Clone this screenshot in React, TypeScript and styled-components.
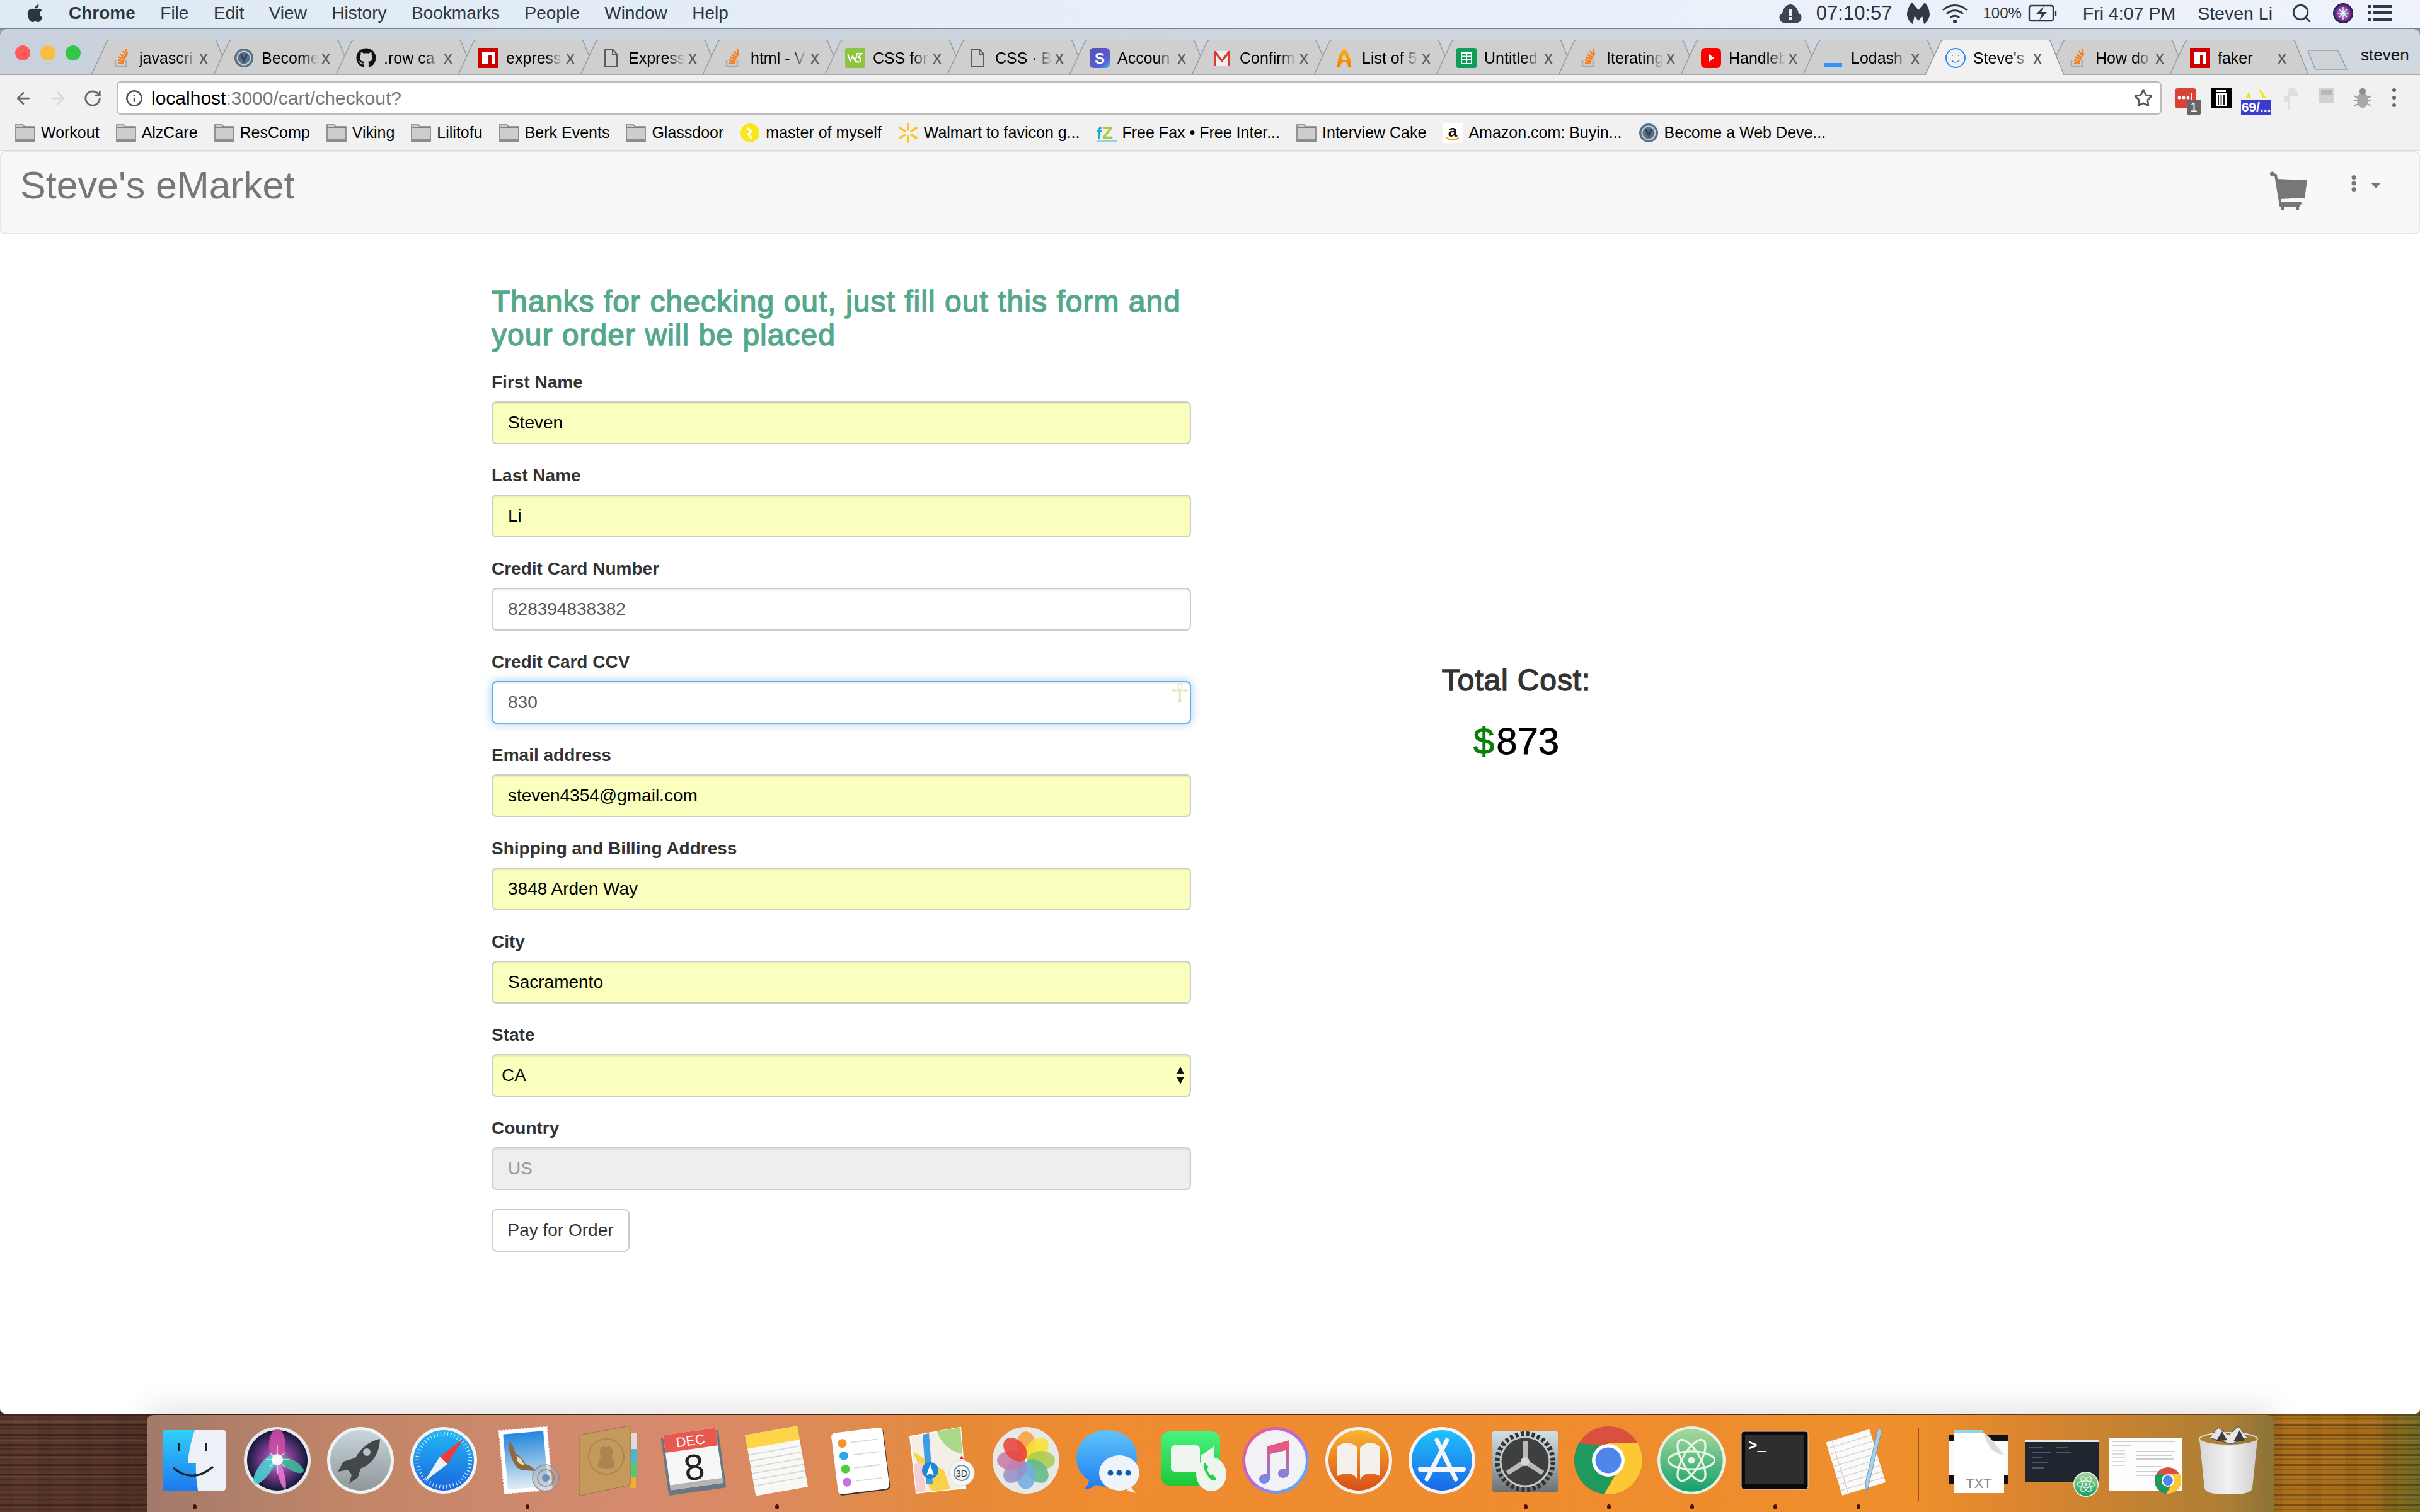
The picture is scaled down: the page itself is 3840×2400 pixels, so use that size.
import React from "react";
import styled, { createGlobalStyle } from "styled-components";
import { FaApple, FaGithub } from "react-icons/fa";
import { ArrowLeft, ArrowRight, RotateCw, Info, Search, Star } from "lucide-react";

const Global = createGlobalStyle`
  html, body { margin: 0; padding: 0; background: #fff; }
  * { box-sizing: border-box; }
`;

const Root = styled.div`
  width: 3840px; height: 2400px; display: flex; flex-direction: column; overflow: hidden;
  font-family: "Liberation Sans", Arial, sans-serif; color: #333;
`;

/* ---------- menu bar ---------- */
const MenuBar = styled.header`
  height: 46px; flex: none; display: flex; align-items: center; padding: 0 45px 2px 43px;
  background: linear-gradient(90deg, #dfeaf4, #e8eff8 50%, #eef3fb);
  border-bottom: 2px solid #72859a; color: #2c3640; font-size: 28px;
`;
const AppleMark = styled.span`display: flex; width: 25px; font-size: 32px; color: #2c3640; margin-right: 41px;`;
const MenuItem = styled.span<{ $bold?: boolean }>`
  margin-right: 39.5px; font-weight: ${p => (p.$bold ? 700 : 400)}; white-space: nowrap;
`;
const StatusArea = styled.div`margin-left: auto; display: flex; align-items: center;`;
const StatusItem = styled.span<{ $gap: number; $size?: number }>`
  margin-left: ${p => p.$gap}px; display: flex; align-items: center; white-space: nowrap;
  font-size: ${p => p.$size ?? 28.5}px;
`;

/* ---------- window ---------- */
const Backdrop = styled.div`
  flex: 1; min-height: 0; display: flex;
  background: linear-gradient(180deg, #8a99a9 0 100px, transparent 100px), linear-gradient(90deg, #3b241c 50%, #7a4f14 50%);
`;
const Window = styled.div`
  flex: 1; display: flex; flex-direction: column; background: #fff; overflow: hidden;
  border-radius: 12px 12px 8px 8px;
`;

const TabStrip = styled.div`
  height: 73px; flex: none; display: flex; align-items: flex-end; padding-left: 145px; position: relative;
  background: linear-gradient(90deg, #c9d2dc, #d2d8df); box-shadow: inset 0 -2px 0 #a8a8a8;
`;
const Lights = styled.div`position: absolute; left: 24px; top: 26px; display: flex; gap: 16px;`;
const Light = styled.i<{ $c: string }>`
  display: block; width: 24px; height: 24px; border-radius: 50%; background: ${p => p.$c};
`;
const Tab = styled.div<{ $active?: boolean }>`
  width: 220px; height: 56px; margin-right: -26px; flex: none; position: relative;
  z-index: ${p => (p.$active ? 3 : 1)}; display: flex; align-items: center; padding: 2px 0 0 32px;
`;
const TabShape = styled.svg`position: absolute; left: 0; top: 0; width: 220px; height: 56px;`;
const Favicon = styled.span`position: relative; display: flex; width: 32px; height: 32px; flex: none;`;
const TabTitle = styled.span<{ $plain?: boolean }>`
  position: relative; margin-left: 12px; width: 90px; overflow: hidden; white-space: nowrap; font-size: 25px; color: #000;
  ${p => (p.$plain ? "" : "mask-image: linear-gradient(90deg, #000 70%, transparent 100%);")}
`;
const TabClose = styled.span`
  position: relative; margin-left: 0; width: 24px; text-align: center; font-size: 27px; line-height: 1; color: #555;
`;
const NewTab = styled.svg`position: absolute; left: 3660px; top: 32px; width: 68px; height: 34px;`;
const ProfileName = styled.span`position: absolute; left: 3746px; top: 26px; font-size: 26px; color: #111;`;

const Toolbar = styled.div`
  height: 66px; flex: none; background: #f1f1f1; display: flex; align-items: flex-start; padding: 10px 0 0 22px;
`;
const NavBtn = styled.span<{ $c: string; $gap: number }>`
  display: flex; width: 30px; height: 53px; align-items: center; justify-content: center;
  color: ${p => p.$c}; margin-right: ${p => p.$gap}px;
`;
const AddressBar = styled.div`
  width: 3245px; height: 53px; background: #fff; border: 2px solid #bcbcbc; border-radius: 7px; flex: none;
  display: flex; align-items: center; padding: 0 12px 0 12px; font-size: 30px; color: #000;
`;
const UrlHost = styled.span`margin-left: 13px;`;
const UrlRest = styled.span`color: #777;`;
const StarSlot = styled.span`margin-left: auto; display: flex; color: #555;`;
const ExtSlot = styled.span<{ $gap: number }>`display: flex; margin-left: ${p => p.$gap}px; margin-top: 11px; flex: none;`;

const Bookmarks = styled.nav`
  height: 55px; flex: none; background: #f1f1f1; border-bottom: 2px solid #dcdcdc;
  display: flex; align-items: center; padding: 0 0 2px 24px; font-size: 25px; color: #000;
`;
const Bookmark = styled.span`display: flex; align-items: center; gap: 9px; margin-right: 26px; white-space: nowrap;`;

const Navbar = styled.div`
  height: 132px; flex: none; background: #f8f8f8; border: 2px solid #e7e7e7; border-radius: 8px;
  display: flex; align-items: flex-start; padding: 0 0 0 30px; position: relative;
`;
const Brand = styled.a`font-size: 61px; line-height: 104px; color: #777;`;
const NavRight = styled.div`margin-left: auto; display: flex; align-items: flex-start; padding: 30px 60px 0 0;`;
const Caret = styled.i`
  display: block; margin: 18px 0 0 22px; width: 0; height: 0;
  border-left: 8px solid transparent; border-right: 8px solid transparent; border-top: 9px solid #777;
`;
const Kebab = styled.svg`margin: 6px 0 0 68px; width: 10px; height: 26px;`;

/* ---------- page ---------- */
const Content = styled.main`flex: 1; width: 2340px; margin: 0 auto; display: flex;`;
const FormColumn = styled.form`width: 1170px; padding: 81px 30px 0;`;
const Heading = styled.h3`
  margin: 0 0 28px; font-size: 48px; line-height: 52.8px; font-weight: 500; letter-spacing: 1.03px;
  color: #55a88b; -webkit-text-stroke: 1.5px #55a88b;
`;
const Field = styled.div`margin-bottom: 30px; position: relative;`;
const Label = styled.label`display: block; font-size: 28px; line-height: 40px; margin-bottom: 10px; font-weight: 700; color: #333;`;
const Input = styled.input<{ $auto?: boolean; $focus?: boolean }>`
  display: block; width: 100%; height: 68px; padding: 0 24px; font: 28px "Liberation Sans", Arial, sans-serif; outline: none;
  color: ${p => (p.$auto ? "#000" : "#555")};
  background: ${p => (p.$auto ? "#faffbd" : "#fff")};
  border: 2px solid ${p => (p.$focus ? "#66afe9" : "#ccc")}; border-radius: 8px;
  box-shadow: ${p => (p.$focus ? "inset 0 2px 2px rgba(0,0,0,.075), 0 0 16px rgba(102,175,233,.6)" : "inset 0 2px 2px rgba(0,0,0,.075)")};
  &:disabled { background: #eee; color: #999; -webkit-text-fill-color: #999; opacity: 1; }
`;
const Ankh = styled.span`
  position: absolute; right: 3px; bottom: 26px; font: 40px/46px "DejaVu Sans", sans-serif; color: #e2e7bd;
`;
const Select = styled.select`
  display: block; width: 100%; height: 68px; padding: 0 14px; font: 28px "Liberation Sans", Arial, sans-serif; color: #000;
  appearance: none; background: #faffbd; border: 2px solid #ccc; border-radius: 8px; outline: none;
  box-shadow: inset 0 2px 2px rgba(0,0,0,.075);
`;
const SelectArrows = styled.svg`position: absolute; right: 11px; bottom: 20px; width: 12px; height: 28px;`;
const PayButton = styled.button`
  width: 219px; height: 68px; font: 28px "Liberation Sans", Arial, sans-serif; color: #333; background: #fff;
  border: 2px solid #ccc; border-radius: 8px; padding: 0; margin-top: 1px; display: block;
`;
const CostColumn = styled.aside`width: 972px; padding-top: 682px; text-align: center;`;
const CostLabel = styled.h3`
  margin: 0; font-size: 48px; line-height: 52.8px; font-weight: 500; letter-spacing: .9px; color: #333; -webkit-text-stroke: 1.5px #333;
`;
const CostValue = styled.div`margin-top: 37px; font-size: 60px; line-height: 66px; color: #000; -webkit-text-stroke: .8px #000;`;
const Dollar = styled.span`color: #0a800a; margin-right: 3px; -webkit-text-stroke: 1.2px #0a800a;`;

/* ---------- dock ---------- */
const DockArea = styled.footer`
  height: 156px; flex: none; display: flex; justify-content: center;
  background:
    repeating-linear-gradient(180deg, rgba(0,0,0,.3) 0 3px, transparent 3px 7px, rgba(0,0,0,.18) 7px 9px, transparent 9px 16px),
    repeating-linear-gradient(180deg, transparent 0 11px, rgba(255,220,190,.08) 11px 14px, transparent 14px 29px),
    repeating-linear-gradient(90deg, rgba(0,0,0,.06) 0 23px, transparent 23px 61px),
    linear-gradient(90deg, #5e3a2e, #553327 240px, #7a5530 3000px, #b0721c 3610px, #a66c1a 3760px, #6e6a24 3840px);
`;
const Dock = styled.div`
  width: 3375px; height: 156px; display: flex; padding-left: 9px; border-radius: 10px 10px 0 0; position: relative; margin-top: 2px;
  background: linear-gradient(90deg, #a27a6a 0, #c08568 300px, #d58a6f 750px, #dc8a5e 1000px, #e68a38 1300px, #ef8b30 1500px, #ee8c2e 2400px, #ef8f2c 2800px, #d9852f 3000px, #ad7f35 3300px, #8b7338 3375px);
  box-shadow: 0 -10px 50px rgba(0,0,0,.12);
`;
const DockSlot = styled.div<{ $on?: boolean }>`
  width: 132px; flex: none; position: relative; display: flex; justify-content: center; padding-top: 18px;
  ${p => p.$on ? `&::after { content: ""; position: absolute; left: 64px; bottom: 6px; width: 6px; height: 8px; border-radius: 50%; background: #4a0f05; }` : ""}
`;
const DockIconSvg = styled.svg`width: 108px; height: 108px; flex: none; overflow: visible;`;
const DockDivider = styled.div`width: 60px; flex: none; display: flex; justify-content: center; padding-top: 20px;`;
const DividerLine = styled.i`display: block; width: 2px; height: 116px; background: rgba(110,50,20,.65);`;

/* ---------- favicons ---------- */
const SoFav = () => (
  <svg viewBox="0 0 32 32" width="32" height="32">
    <path d="M6 20v9h17v-9" fill="none" stroke="#aaa" strokeWidth="2.5" />
    <path d="M10 24h10M10.3 19.5l10 1.5M11.5 14.5l9.5 3.5M14 10l8.5 6M18 5l6 8.5M23 2l2 10" stroke="#f48024" strokeWidth="2.8" />
  </svg>
);
const VFav = () => (
  <svg viewBox="0 0 32 32" width="32" height="32">
    <circle cx="16" cy="16" r="15" fill="#5a7084" />
    <circle cx="16" cy="16" r="10.5" fill="none" stroke="#c9d3dc" strokeWidth="2" />
    <path d="M9 9l7 15 7-15h-4l-3 7-3-7z" fill="#34495e" />
  </svg>
);
const NpmFav = () => (
  <svg viewBox="0 0 32 32" width="32" height="32">
    <rect width="32" height="32" fill="#c00" />
    <path d="M6 6h20v20h-5V11h-5v15H6z" fill="#fff" />
  </svg>
);
const DocFav = () => (
  <svg viewBox="0 0 32 32" width="32" height="32">
    <path d="M7 2h12l7 8v20H7zM19 2v8h7" fill="none" stroke="#5c5c5c" strokeWidth="2" />
  </svg>
);
const W3Fav = () => (
  <svg viewBox="0 0 32 32" width="32" height="32">
    <rect width="32" height="32" rx="3" fill="#8cc63f" />
    <path d="M4 9l4 12 4-8 4 8 3-12h7l-5 6c4 0 5 5 2 7s-5 0-6-1" fill="none" stroke="#fff" strokeWidth="2" />
  </svg>
);
const StripeFav = () => (
  <svg viewBox="0 0 32 32" width="32" height="32">
    <defs><linearGradient id="stf" x1="0" y1="0" x2="1" y2="1"><stop offset="0" stopColor="#5a4fb0" /><stop offset=".75" stopColor="#5560d8" /><stop offset="1" stopColor="#42c6f5" /></linearGradient></defs>
    <rect width="32" height="32" rx="6" fill="url(#stf)" />
    <text x="16" y="25" textAnchor="middle" fontFamily="Liberation Sans" fontWeight="700" fontSize="24" fill="#fff">S</text>
  </svg>
);
const GmailFav = () => (
  <svg viewBox="0 0 32 32" width="32" height="32">
    <rect x="3" y="5" width="26" height="24" fill="#eee" />
    <path d="M3 29V5h3l10 13L26 5h3v24h-4V12l-9 11-9-11v17z" fill="#d93b2b" />
  </svg>
);
const FlameFav = () => (
  <svg viewBox="0 0 32 32" width="32" height="32">
    <defs><linearGradient id="flf" x1="0" y1="0" x2="0" y2="1"><stop offset="0" stopColor="#ffb400" /><stop offset="1" stopColor="#f57c00" /></linearGradient></defs>
    <path d="M16 1C8 8 5 20 5 31h5c0-6 2-9 6-9s6 3 6 9h5C27 20 24 8 16 1zm0 9c3 3 4 6 4 9h-8c0-3 1-6 4-9z" fill="url(#flf)" />
  </svg>
);
const SheetFav = () => (
  <svg viewBox="0 0 32 32" width="32" height="32">
    <rect width="32" height="32" rx="3" fill="#0f9d58" />
    <path d="M8 8h16v17H8zM8 13.5h16M8 19h16M16 8v17" fill="none" stroke="#fff" strokeWidth="2" />
  </svg>
);
const YtFav = () => (
  <svg viewBox="0 0 32 32" width="32" height="32">
    <rect width="32" height="32" rx="7" fill="#f00" />
    <path d="M13 10l8 6-8 6z" fill="#fff" />
  </svg>
);
const LodashFav = () => (
  <svg viewBox="0 0 32 32" width="32" height="32"><rect x="2" y="24" width="28" height="6" fill="#3492ff" /></svg>
);
const SmileFav = () => (
  <svg viewBox="0 0 32 32" width="32" height="32">
    <circle cx="16" cy="16" r="15" fill="none" stroke="#2a8cf0" strokeWidth="2" />
    <path d="M11 11v2M21 11v2M10 20q6 6 12 0" fill="none" stroke="#2a8cf0" strokeWidth="1.6" />
  </svg>
);
const FolderIcon = () => (
  <svg viewBox="0 0 32 32" width="32" height="32">
    <path d="M1 3h11l3 3h16v24H1z" fill="#cdcdcd" stroke="#808080" strokeWidth="1.6" />
    <path d="M1 7h30" stroke="#808080" strokeWidth="2" />
    <rect x="1" y="26" width="30" height="4" fill="#8c8c8c" />
  </svg>
);
const MasterFav = () => (
  <svg viewBox="0 0 32 32" width="32" height="32">
    <circle cx="16" cy="16" r="15" fill="#f8e71c" />
    <path d="M12 8l6 6-5 4 6 7" fill="none" stroke="#fff" strokeWidth="3" />
  </svg>
);
const WalmartFav = () => (
  <svg viewBox="0 0 32 32" width="32" height="32">
    <path d="M16 1v10M16 21v10M3 8l8 5M21 19l8 5M29 8l-8 5M11 19l-8 5" stroke="#ffc220" strokeWidth="3.4" strokeLinecap="round" />
  </svg>
);
const FaxFav = () => (
  <svg viewBox="0 0 32 32" width="32" height="32">
    <text x="0" y="25" fontFamily="Liberation Sans" fontWeight="700" fontSize="24" fill="#1ea7dc">f</text>
    <text x="9" y="25" fontFamily="Liberation Sans" fontWeight="700" fontSize="28" fill="#a4cd39">Z</text>
    <rect y="28" width="32" height="3" fill="#8fd3ee" />
  </svg>
);
const AmazonFav = () => (
  <svg viewBox="0 0 32 32" width="32" height="32">
    <rect width="32" height="32" rx="4" fill="#fff" />
    <text x="16" y="22" textAnchor="middle" fontFamily="Liberation Sans" fontWeight="700" fontSize="26" fill="#111">a</text>
    <path d="M6 24q10 6 20 0" fill="none" stroke="#f90" strokeWidth="2.4" />
  </svg>
);

const tabs: { t: string; f: React.ReactNode; active?: boolean; plain?: boolean }[] = [
  { t: "javascri", f: <SoFav /> },
  { t: "Become", f: <VFav /> },
  { t: ".row ca", f: <FaGithub size={32} color="#111" /> },
  { t: "express", f: <NpmFav /> },
  { t: "Express", f: <DocFav /> },
  { t: "html - V", f: <SoFav /> },
  { t: "CSS for", f: <W3Fav /> },
  { t: "CSS · B", f: <DocFav /> },
  { t: "Accoun", f: <StripeFav /> },
  { t: "Confirm", f: <GmailFav /> },
  { t: "List of 5", f: <FlameFav /> },
  { t: "Untitled", f: <SheetFav /> },
  { t: "Iterating", f: <SoFav /> },
  { t: "Handleb", f: <YtFav /> },
  { t: "Lodash", f: <LodashFav /> },
  { t: "Steve's", f: <SmileFav />, active: true },
  { t: "How do", f: <SoFav /> },
  { t: "faker", f: <NpmFav />, plain: true },
];

const marks: { t: string; f: React.ReactNode }[] = [
  { t: "Workout", f: <FolderIcon /> },
  { t: "AlzCare", f: <FolderIcon /> },
  { t: "ResComp", f: <FolderIcon /> },
  { t: "Viking", f: <FolderIcon /> },
  { t: "Lilitofu", f: <FolderIcon /> },
  { t: "Berk Events", f: <FolderIcon /> },
  { t: "Glassdoor", f: <FolderIcon /> },
  { t: "master of myself", f: <MasterFav /> },
  { t: "Walmart to favicon g...", f: <WalmartFav /> },
  { t: "Free Fax • Free Inter...", f: <FaxFav /> },
  { t: "Interview Cake", f: <FolderIcon /> },
  { t: "Amazon.com: Buyin...", f: <AmazonFav /> },
  { t: "Become a Web Deve...", f: <VFav /> },
];

/* ---------- dock icons ---------- */
const ChromeArt = ({ cx, cy, r }: { cx: number; cy: number; r: number }) => {
  const s = r / 50;
  return (
    <g transform={`translate(${cx} ${cy}) scale(${s})`}>
      <circle r="50" fill="#d9503f" />
      <path d="M-43.3 -25 A50 50 0 0 0 -6 49.6 L22 0 L-10 -22 Z" fill="#1d9a5c" />
      <path d="M0 -25 H43.3 A50 50 0 0 1 -6 49.6 L20 5 Z" fill="#fcc934" />
      <circle r="24" fill="#fff" />
      <circle r="19" fill="#4f86ec" />
    </g>
  );
};
const AtomArt = ({ cx, cy, r, id }: { cx: number; cy: number; r: number; id: string }) => (
  <g transform={`translate(${cx} ${cy}) scale(${r / 50})`}>
    <defs><linearGradient id={id} x1="0" y1="0" x2="0" y2="1"><stop offset="0" stopColor="#a9d89b" /><stop offset="1" stopColor="#14a06c" /></linearGradient></defs>
    <circle r="50" fill="#e6f0e2" />
    <circle r="46" fill={`url(#${id})`} />
    <g fill="none" stroke="#e8f5e4" strokeWidth="3">
      <ellipse rx="34" ry="13" transform="rotate(60)" />
      <ellipse rx="34" ry="13" transform="rotate(120)" />
      <ellipse rx="34" ry="13" />
    </g>
    <circle r="5" fill="#e8f5e4" />
  </g>
);

const FinderIcon = () => (
  <DockIconSvg viewBox="0 0 108 108">
    <defs><linearGradient id="fl" x1="0" y1="0" x2="0" y2="1"><stop offset="0" stopColor="#2fd0fb" /><stop offset="1" stopColor="#1e79ef" /></linearGradient></defs>
    <rect x="4" y="6" width="100" height="96" rx="4" fill="url(#fl)" />
    <path d="M55 6C49 24 45 42 44 58H57C56 72 58 88 60 102H100a4 4 0 0 0 4-4V10a4 4 0 0 0-4-4Z" fill="#edf1f7" />
    <rect x="29" y="26" width="3" height="13" fill="#222" /><rect x="72" y="26" width="3" height="13" fill="#222" />
    <path d="M21 66Q52 92 84 64" fill="none" stroke="#1d2430" strokeWidth="3.5" />
  </DockIconSvg>
);
const SiriIcon = () => (
  <DockIconSvg viewBox="0 0 108 108">
    <defs>
      <radialGradient id="sg" cx=".5" cy=".5" r=".55"><stop offset="0" stopColor="#6ad9d6" /><stop offset=".4" stopColor="#8b3f9a" /><stop offset=".9" stopColor="#141a3c" /></radialGradient>
    </defs>
    <circle cx="54" cy="54" r="53" fill="#e8e8e8" />
    <circle cx="54" cy="54" r="48" fill="url(#sg)" />
    <g opacity=".85">
      <ellipse cx="54" cy="30" rx="13" ry="26" fill="#d44fa8" />
      <ellipse cx="34" cy="68" rx="10" ry="28" transform="rotate(35 34 68)" fill="#4fd9d9" />
      <ellipse cx="78" cy="62" rx="8" ry="20" transform="rotate(-60 78 62)" fill="#3fbf9a" />
      <ellipse cx="60" cy="76" rx="5" ry="24" transform="rotate(-15 60 76)" fill="#ee7bd0" />
    </g>
    <circle cx="54" cy="53" r="9" fill="#fff" opacity=".9" />
    <path d="M54 30v46M36 53h36M42 42l24 22M66 42 42 64" stroke="#fff" strokeWidth="1.6" opacity=".7" />
  </DockIconSvg>
);
const LaunchIcon = () => (
  <DockIconSvg viewBox="0 0 108 108">
    <defs><linearGradient id="lg" x1="0" y1="0" x2="0" y2="1"><stop offset="0" stopColor="#c8d6dc" /><stop offset="1" stopColor="#8f9698" /></linearGradient></defs>
    <circle cx="54" cy="54" r="53" fill="#eef3f4" />
    <circle cx="54" cy="54" r="48" fill="url(#lg)" />
    <path d="M85 20C66 24 54 36 46 50L27 56 18 72l16-3 6 8-4 14 14-10 4-14C74 60 84 42 85 20Z" fill="#434749" />
    <circle cx="64" cy="41" r="6" fill="#b8c3c7" />
  </DockIconSvg>
);
const SafariIcon = () => (
  <DockIconSvg viewBox="0 0 108 108">
    <defs><linearGradient id="sfg" x1="0" y1="0" x2="0" y2="1"><stop offset="0" stopColor="#22b8f4" /><stop offset="1" stopColor="#1a66dd" /></linearGradient></defs>
    <circle cx="54" cy="54" r="53" fill="#f2f2f2" />
    <circle cx="54" cy="54" r="48" fill="url(#sfg)" />
    <circle cx="54" cy="54" r="42" fill="none" stroke="#d6eaff" strokeWidth="6" strokeDasharray="1.2 4.3" />
    <path d="M85 20 60 60 48 48Z" fill="#ee3b3b" />
    <path d="M23 88 48 48 60 60Z" fill="#eef1f4" />
  </DockIconSvg>
);
const MailIcon = () => (
  <DockIconSvg viewBox="0 0 108 108">
    <defs><linearGradient id="mg" x1="0" y1="0" x2="0" y2="1"><stop offset="0" stopColor="#2486de" /><stop offset=".7" stopColor="#a9cdea" /><stop offset="1" stopColor="#e2eef7" /></linearGradient></defs>
    <g transform="rotate(-5 50 54)">
      <rect x="14" y="4" width="76" height="100" fill="#fff" stroke="#fff" strokeWidth="2" strokeDasharray="3 2" />
      <rect x="20" y="10" width="64" height="88" fill="url(#mg)" />
      <path d="M28 20c5 6 8 14 9 22 6 4 12 10 14 18 6 2 12 6 16 12-6 0-12-1-16-2-9 0-16-6-19-16C29 44 26 32 28 20Z" fill="#8c6a3f" />
      <path d="M38 46c5 2 9 8 11 15-4 0-8-2-10-7Z" fill="#ecdcb9" />
    </g>
    <circle cx="84" cy="82" r="21" fill="#a8aeb4" fillOpacity=".45" stroke="#8d8f92" strokeWidth="1.5" />
    <circle cx="84" cy="82" r="13" fill="none" stroke="#7f8488" strokeWidth="1.5" />
    <circle cx="84" cy="82" r="6" fill="#6b8ebb" />
  </DockIconSvg>
);
const ContactsIcon = () => (
  <DockIconSvg viewBox="0 0 108 108">
    <rect x="86" y="10" width="10" height="26" fill="#ddd" />
    <rect x="86" y="36" width="10" height="20" fill="#45b8d8" />
    <rect x="86" y="56" width="10" height="24" fill="#54c878" />
    <rect x="86" y="80" width="9" height="18" fill="#eeb02c" />
    <path d="M5 14 80 0a5 5 0 0 1 7 5V88a7 7 0 0 1-5 6L8 110a3 3 0 0 1-3-3Z" fill="#c49a5c" stroke="#9a7440" strokeWidth="1" />
    <circle cx="48" cy="48" r="28" fill="none" stroke="#aa8552" strokeWidth="2" />
    <path d="M35 64c0-9 2-13 5-15-6-9 1-22 8-15 7-7 14 6 8 15 3 2 5 6 5 15-5 4-21 4-26 0Z" fill="#aa8552" />
  </DockIconSvg>
);
const CalendarIcon = () => (
  <DockIconSvg viewBox="0 0 108 108">
    <g transform="rotate(-8 54 54)">
      <rect x="8" y="12" width="92" height="92" rx="2" fill="#6a7883" />
      <rect x="12" y="8" width="84" height="88" fill="#f7f7f7" />
      <rect x="12" y="8" width="84" height="28" fill="#e8584f" />
      <text x="54" y="30" textAnchor="middle" fontFamily="Liberation Sans" fontSize="22" fill="#fff">DEC</text>
      <text x="54" y="85" textAnchor="middle" fontFamily="Liberation Sans" fontSize="58" fill="#222">8</text>
      <rect x="12" y="88" width="84" height="8" fill="#b5b5b5" />
    </g>
  </DockIconSvg>
);
const NotesIcon = () => (
  <DockIconSvg viewBox="0 0 108 108">
    <g transform="rotate(-10 54 54)">
      <rect x="12" y="6" width="84" height="98" fill="#f8f8f6" />
      <rect x="12" y="6" width="84" height="22" fill="#fcd548" />
      <path d="M12 38h84M12 48h84M12 58h84M12 68h84M12 78h84M12 88h84" stroke="#d4d4d0" strokeWidth="1.6" />
    </g>
  </DockIconSvg>
);
const RemindersIcon = () => (
  <DockIconSvg viewBox="0 0 108 108">
    <g transform="rotate(-7 54 54)">
      <rect x="14" y="6" width="82" height="98" rx="6" fill="#333" transform="translate(1 2)" />
      <rect x="14" y="6" width="82" height="98" rx="6" fill="#fff" />
      <circle cx="30" cy="24" r="7" fill="#f5922a" /><circle cx="30" cy="44" r="7" fill="#2ea6ee" />
      <circle cx="30" cy="65" r="7" fill="#50cc3e" /><circle cx="30" cy="86" r="7" fill="#c474e0" />
      <path d="M44 24h42M44 44h42M44 65h42M44 86h42" stroke="#d8d8d8" strokeWidth="1.8" />
    </g>
  </DockIconSvg>
);
const MapsIcon = () => (
  <DockIconSvg viewBox="0 0 108 108">
    <path d="M2 16 82 2l8 96-78 8Z" fill="#f3efe6" stroke="#fff" strokeWidth="2" />
    <path d="M45 8 82 2l3 42C66 40 50 26 45 8Z" fill="#a9d988" />
    <path d="M6 40l50 30 10 30-30 3Z" fill="#f8d24a" />
    <path d="M22 13l10-2 6 80-10 1Z" fill="#3a9fe8" />
    <path d="M8 60 12 104h14l-4-46Z" fill="#f7ccd2" />
    <circle cx="34" cy="70" r="13" fill="#1f86d8" />
    <path d="M34 60l6 18-6-3-6 3Z" fill="#fff" />
    <circle cx="84" cy="74" r="20" fill="#f6f6f6" stroke="#ddd" />
    <circle cx="84" cy="74" r="12" fill="none" stroke="#6d93ad" strokeWidth="2" />
    <text x="84" y="80" textAnchor="middle" fontFamily="Liberation Sans" fontSize="15" fill="#333">3D</text>
    <path d="M84 46l3 6h-6Z" fill="#e23" />
  </DockIconSvg>
);
const PhotosIcon = () => {
  const cols = ["#f6a040", "#f7e133", "#a8cc4d", "#62b88a", "#71aee0", "#9a8fc8", "#c77ba8", "#e8443a"];
  return (
    <DockIconSvg viewBox="0 0 108 108">
      <circle cx="54" cy="54" r="53" fill="#e8e8e8" />
      {cols.map((c, i) => (
        <ellipse key={c} cx="54" cy="30" rx="15" ry="22" fill={c} opacity=".88" transform={`rotate(${i * 45} 54 54)`} />
      ))}
      <circle cx="54" cy="54" r="2" fill="#fff" />
    </DockIconSvg>
  );
};
const MessagesIcon = () => (
  <DockIconSvg viewBox="0 0 108 108">
    <defs><linearGradient id="mgb" x1="0" y1="0" x2="0" y2="1"><stop offset="0" stopColor="#5fc4fb" /><stop offset="1" stopColor="#1f7cf0" /></linearGradient></defs>
    <path d="M50 6C22 6 2 26 2 50c0 16 8 28 20 36-1 6-4 10-8 14 8 0 14-3 19-7 6 2 11 3 17 3 28 0 48-20 48-46S78 6 50 6Z" fill="url(#mgb)" />
    <ellipse cx="70" cy="74" rx="32" ry="28" fill="#eef4fa" />
    <path d="M88 96l8 10-14-4Z" fill="#eef4fa" />
    <circle cx="56" cy="74" r="4.5" fill="#125ea8" /><circle cx="70" cy="74" r="4.5" fill="#125ea8" /><circle cx="84" cy="74" r="4.5" fill="#125ea8" />
  </DockIconSvg>
);
const FaceTimeIcon = () => (
  <DockIconSvg viewBox="0 0 108 108">
    <defs><linearGradient id="ft" x1="0" y1="0" x2="0" y2="1"><stop offset="0" stopColor="#46f37f" /><stop offset="1" stopColor="#1fc838" /></linearGradient></defs>
    <rect x="4" y="8" width="94" height="86" rx="14" fill="url(#ft)" />
    <rect x="20" y="30" width="46" height="42" rx="6" fill="#eef5ee" />
    <path d="M68 46l20-14v38l-20-14Z" fill="#eef5ee" />
    <ellipse cx="84" cy="76" rx="24" ry="27" fill="#eef5ee" />
    <path d="M74 58c-3 2-3 7 0 13s7 12 12 15c3 1 6-1 6-3l-6-7-3 2c-3-3-5-7-6-11l3-2Z" fill="#2ccf4c" />
  </DockIconSvg>
);
const ItunesIcon = () => (
  <DockIconSvg viewBox="0 0 108 108">
    <defs>
      <linearGradient id="itr" x1="0" y1="0" x2="1" y2="1"><stop offset="0" stopColor="#fb5c74" /><stop offset=".5" stopColor="#b568e0" /><stop offset="1" stopColor="#37c5f8" /></linearGradient>
      <linearGradient id="itn" x1="0" y1="0" x2="0" y2="1"><stop offset="0" stopColor="#f9506c" /><stop offset="1" stopColor="#6d8bf5" /></linearGradient>
    </defs>
    <circle cx="54" cy="54" r="53" fill="url(#itr)" />
    <circle cx="54" cy="54" r="48" fill="#f0f2f6" />
    <path d="M40 32 76 22V72c0 6-5 10-10 10s-8-3-8-7 4-8 9-8h3V38L46 44V80c0 7-5 11-10 11s-8-3-8-7 4-8 9-8h3Z" fill="url(#itn)" />
  </DockIconSvg>
);
const BooksIcon = () => (
  <DockIconSvg viewBox="0 0 108 108">
    <defs><linearGradient id="bk" x1="0" y1="0" x2="0" y2="1"><stop offset="0" stopColor="#fcb330" /><stop offset="1" stopColor="#d84e16" /></linearGradient></defs>
    <circle cx="54" cy="54" r="53" fill="#f2f2f2" />
    <circle cx="54" cy="54" r="48" fill="url(#bk)" />
    <path d="M52 34c-4-5-11-8-17-8-6 0-11 3-15 7v46c6-3 11-4 16-4 7 0 13 3 16 10Z" fill="#f4f1ec" />
    <path d="M56 34c4-5 11-8 17-8 6 0 11 3 15 7v46c-6-3-11-4-16-4-7 0-13 3-16 10Z" fill="#f4f1ec" />
  </DockIconSvg>
);
const StoreIcon = () => (
  <DockIconSvg viewBox="0 0 108 108">
    <defs><linearGradient id="as" x1="0" y1="0" x2="0" y2="1"><stop offset="0" stopColor="#1fc3fb" /><stop offset="1" stopColor="#1b67e8" /></linearGradient></defs>
    <circle cx="54" cy="54" r="53" fill="#f4f4f4" />
    <circle cx="54" cy="54" r="48" fill="url(#as)" />
    <path d="M62 22 30 84M46 22 76 84" stroke="#f4f6fa" strokeWidth="7" strokeLinecap="round" />
    <path d="M20 68H88" stroke="#f4f6fa" strokeWidth="8" strokeLinecap="round" />
  </DockIconSvg>
);
const PrefsIcon = () => (
  <DockIconSvg viewBox="0 0 108 108">
    <defs><linearGradient id="pf" x1="0" y1="0" x2="0" y2="1"><stop offset="0" stopColor="#cfe0e6" /><stop offset=".55" stopColor="#9ea9ad" /><stop offset="1" stopColor="#6e7072" /></linearGradient></defs>
    <rect x="2" y="8" width="104" height="96" rx="3" fill="url(#pf)" />
    <circle cx="54" cy="56" r="44" fill="none" stroke="#333" strokeWidth="8" strokeDasharray="5 3.7" />
    <circle cx="54" cy="56" r="39" fill="#3e3f40" stroke="#c8c8c8" strokeWidth="3" />
    <path d="M54 24v32M54 56 26 74M54 56l28 18" stroke="#b9b9b9" strokeWidth="8" />
    <circle cx="54" cy="56" r="7" fill="#d5d5d5" />
  </DockIconSvg>
);
const ChromeIcon = () => (
  <DockIconSvg viewBox="0 0 108 108"><ChromeArt cx={54} cy={54} r={54} /></DockIconSvg>
);
const AtomIcon = () => (
  <DockIconSvg viewBox="0 0 108 108"><AtomArt cx={54} cy={54} r={54} id="atA" /></DockIconSvg>
);
const TerminalIcon = () => (
  <DockIconSvg viewBox="0 0 108 108">
    <rect x="1" y="8" width="106" height="92" rx="4" fill="#0a0a0a" stroke="#cfcfcf" strokeWidth="1" />
    <rect x="7" y="14" width="94" height="78" fill="#2e2e2e" />
    <text x="12" y="38" fontFamily="Liberation Mono" fontWeight="700" fontSize="24" fill="#fff">&gt;_</text>
  </DockIconSvg>
);
const TextEditIcon = () => (
  <DockIconSvg viewBox="0 0 108 108">
    <g transform="rotate(-17 54 54)">
      <rect x="14" y="12" width="72" height="88" fill="#fafafa" />
      <path d="M14 22h72M14 32h72M14 42h72M14 52h72M14 62h72M14 72h72M14 82h72M14 92h72" stroke="#d4d4d4" strokeWidth="1.5" />
      <path d="M24 12v88" stroke="#efb9b9" strokeWidth="1" />
    </g>
    <path d="M86 4 92 6 72 90l-4 16-2-16Z" fill="#a8cfe6" stroke="#6f9ab8" strokeWidth="1" />
  </DockIconSvg>
);
const TxtIcon = () => (
  <DockIconSvg viewBox="0 0 108 108">
    <rect x="6" y="14" width="94" height="78" fill="#111" />
    <rect x="6" y="24" width="94" height="54" fill="#fafafa" />
    <rect x="14" y="6" width="46" height="6" fill="#8fd7ec" />
    <path d="M14 10H62L94 46V106H14Z" fill="#fff" />
    <path d="M62 10C66 26 72 42 94 46C86 36 76 20 62 10Z" fill="#dcdcdc" />
    <text x="54" y="98" textAnchor="middle" fontFamily="Liberation Sans" fontSize="22" fill="#888">TXT</text>
  </DockIconSvg>
);
const AtomWindowIcon = () => (
  <DockIconSvg viewBox="0 0 108 108">
    <rect x="-4" y="22" width="116" height="66" fill="#20262f" />
    <rect x="-4" y="22" width="116" height="3" fill="#e8e8e8" />
    <path d="M2 34h22M6 42h30M6 50h16M6 58h26M6 66h20M44 34h20M44 42h24" stroke="#5a6c7c" strokeWidth="1.4" />
    <AtomArt cx={92} cy={92} r={20} id="atB" />
  </DockIconSvg>
);
const ChromeWindowIcon = () => (
  <DockIconSvg viewBox="0 0 108 108">
    <rect x="-4" y="18" width="116" height="84" fill="#fdfdfd" />
    <path d="M2 24h100M2 30h30M40 40h60M40 46h56M40 52h60M40 64h40M40 72h60M40 78h52" stroke="#c0c0c0" strokeWidth="1.4" />
    <path d="M2 38h20M2 44h20M2 50h20M2 56h20M2 62h20" stroke="#d0d0d0" strokeWidth="1.4" />
    <ChromeArt cx={90} cy={86} r={21} />
  </DockIconSvg>
);
const TrashIcon = () => (
  <DockIconSvg viewBox="0 0 108 108">
    <defs><linearGradient id="tg" x1="0" y1="0" x2="1" y2="0"><stop offset="0" stopColor="#d8d8d8" /><stop offset=".5" stopColor="#f2f2f2" /><stop offset="1" stopColor="#cfcfcf" /></linearGradient></defs>
    <path d="M24 18 38 2l16 12L70 0l14 18-26 10Z" fill="#e6e6e6" stroke="#444" strokeWidth="1" />
    <path d="M8 20c0 6 12 10 46 10s46-4 46-10l-8 78c-2 8-14 10-38 10s-36-2-38-10Z" fill="url(#tg)" />
    <ellipse cx="54" cy="20" rx="46" ry="10" fill="none" stroke="#e0e0e0" strokeWidth="2" />
    <path d="M34 24 44 8l8 14ZM62 24 72 6l8 18Z" fill="#3b3b3b" />
  </DockIconSvg>
);

const CartIcon = () => (
  <svg width="60" height="62" viewBox="0 0 60 62">
    <circle cx="3.500" cy="4" r="3.500" fill="#777" />
    <path d="M3 4 9 6 17 54H48" fill="none" stroke="#777" strokeWidth="4" />
    <path d="M10 12 59 14 55 42 15 44Z" fill="#777" />
    <rect x="14" y="48" width="36" height="5" rx="2" fill="#777" />
    <rect x="18" y="52" width="4" height="9" fill="#777" /><rect x="42" y="52" width="4" height="9" fill="#777" />
  </svg>
);

const fields = [
  { label: "First Name", value: "Steven", auto: true },
  { label: "Last Name", value: "Li", auto: true },
  { label: "Credit Card Number", value: "828394838382" },
  { label: "Credit Card CCV", value: "830", focus: true },
  { label: "Email address", value: "steven4354@gmail.com", auto: true },
  { label: "Shipping and Billing Address", value: "3848 Arden Way", auto: true },
  { label: "City", value: "Sacramento", auto: true },
];

export default function App() {
  return (
    <Root>
      <Global />
      <MenuBar>
        <AppleMark><FaApple /></AppleMark>
        <MenuItem $bold>Chrome</MenuItem>
        {["File", "Edit", "View", "History", "Bookmarks", "People", "Window", "Help"].map(m => <MenuItem key={m}>{m}</MenuItem>)}
        <StatusArea>
          <StatusItem $gap={0}>
            <svg width="38" height="30" viewBox="0 0 38 30"><path d="M8 30a8 8 0 0 1-2-15C8 6 13 1 19 1s11 5 13 14a8 8 0 0 1-2 15Z" fill="#3a4650" /><rect x="17" y="8" width="4" height="11" fill="#e8eff8" /><rect x="17" y="21" width="4" height="4" fill="#e8eff8" /></svg>
          </StatusItem>
          <StatusItem $gap={22} $size={31}>07:10:57</StatusItem>
          <StatusItem $gap={24}>
            <svg width="36" height="34" viewBox="0 0 36 34"><path d="M8 0 18 12 28 0c6 6 8 14 8 20-1 6-5 12-9 14l-3-13-6 8-6-8-3 13C5 32 1 26 0 20 0 14 2 6 8 0Z" fill="#2f3a44" /></svg>
          </StatusItem>
          <StatusItem $gap={19}>
            <svg width="42" height="32" viewBox="0 0 42 32" fill="none" stroke="#2f3a44" strokeWidth="3"><path d="M2 11a28 28 0 0 1 38 0M8 17a19 19 0 0 1 26 0M14 23a10 10 0 0 1 14 0" /><circle cx="21" cy="29" r="1.6" fill="#2f3a44" /></svg>
          </StatusItem>
          <StatusItem $gap={23} $size={24}>100%</StatusItem>
          <StatusItem $gap={10}>
            <svg width="46" height="30" viewBox="0 0 46 30" fill="none" stroke="#2f3a44" strokeWidth="2.4"><rect x="2" y="3" width="38" height="24" rx="3" /><path d="M44 11v8" /><path d="M25 4 13 16h9l-4 10 12-13h-9l4-9Z" fill="#2f3a44" stroke="none" /></svg>
          </StatusItem>
          <StatusItem $gap={41}>Fri 4:07 PM</StatusItem>
          <StatusItem $gap={35}>Steven Li</StatusItem>
          <StatusItem $gap={29}><Search size={34} strokeWidth={2} color="#2f3a44" /></StatusItem>
          <StatusItem $gap={33}>
            <svg width="32" height="32" viewBox="0 0 32 32"><defs><radialGradient id="sm" cx=".5" cy=".5" r=".5"><stop offset="0" stopColor="#7fe5e0" /><stop offset=".55" stopColor="#a040a8" /><stop offset="1" stopColor="#141a4c" /></radialGradient></defs><circle cx="16" cy="16" r="16" fill="url(#sm)" /><path d="M16 6v20M7 16h18M10 10l12 12M22 10 10 22" stroke="#fff" strokeWidth="1.2" /></svg>
          </StatusItem>
          <StatusItem $gap={23}>
            <svg width="38" height="26" viewBox="0 0 38 26" fill="#2f3a44"><rect width="5" height="5" /><rect x="9" width="29" height="5" /><rect y="10" width="5" height="5" /><rect x="9" y="10" width="29" height="5" /><rect y="20" width="5" height="5" /><rect x="9" y="20" width="29" height="5" /></svg>
          </StatusItem>
        </StatusArea>
      </MenuBar>

      <Backdrop>
        <Window>
          <TabStrip>
            <Lights>
              <Light $c="#fc5b57" /><Light $c="#fdbc40" /><Light $c="#33c748" />
            </Lights>
            {tabs.map(t => (
              <Tab key={t.t} $active={t.active}>
                <TabShape viewBox="0 0 220 56">
                  <path d="M0 56 24 4Q26 0 30 0H194Q198 0 199 4L220 56Z" fill={t.active ? "#f1f1f1" : "#cfcfcf"} />
                  <path d="M0 56 24 4Q26 0 30 0H194Q198 0 199 4L220 56" fill="none" stroke="#9a9a9a" strokeWidth="1.5" />
                  {!t.active && <rect y="54" width="220" height="2" fill="#a8a8a8" />}
                </TabShape>
                <Favicon>{t.f}</Favicon>
                <TabTitle $plain={t.plain}>{t.t}</TabTitle>
                <TabClose>x</TabClose>
              </Tab>
            ))}
            <NewTab viewBox="0 0 68 34">
              <path d="M2 2H46Q50 2 51 5L64 32H16Q13 32 12 28Z" fill="#cfd3d6" stroke="#9a9fa4" strokeWidth="1.5" />
            </NewTab>
            <ProfileName>steven</ProfileName>
          </TabStrip>

          <Toolbar>
            <NavBtn $c="#666" $gap={25}><ArrowLeft size={32} strokeWidth={2.2} /></NavBtn>
            <NavBtn $c="#d8d8d8" $gap={25}><ArrowRight size={32} strokeWidth={2.2} /></NavBtn>
            <NavBtn $c="#666" $gap={23}><RotateCw size={30} strokeWidth={2.2} /></NavBtn>
            <AddressBar>
              <Info size={28} strokeWidth={2.2} color="#555" />
              <UrlHost>localhost</UrlHost><UrlRest>:3000/cart/checkout?</UrlRest>
              <StarSlot><Star size={30} strokeWidth={2.2} /></StarSlot>
            </AddressBar>
            <ExtSlot $gap={22}>
              <svg width="40" height="42" viewBox="0 0 40 42"><rect width="32" height="32" rx="3" fill="#d94237" /><circle cx="6" cy="15" r="2.5" fill="#fff" /><circle cx="13" cy="15" r="2.5" fill="#fff" /><circle cx="20" cy="15" r="2.5" fill="#fff" /><rect x="25" y="8" width="1.5" height="14" fill="#fff" /><rect x="18" y="18" width="22" height="24" rx="2" fill="#666" /><text x="29" y="37" textAnchor="middle" fontFamily="Liberation Sans" fontSize="20" fill="#fff">1</text></svg>
            </ExtSlot>
            <ExtSlot $gap={16}>
              <svg width="33" height="32" viewBox="0 0 33 32"><rect width="33" height="32" fill="#000" /><rect x="9" y="3" width="15" height="3" fill="#fff" /><rect x="8" y="8" width="17" height="21" fill="#fff" /><path d="M12 10v17M16.500 10v17M21 10v17" stroke="#000" strokeWidth="1.8" /></svg>
            </ExtSlot>
            <ExtSlot $gap={15}>
              <svg width="48" height="42" viewBox="0 0 48 42"><path d="M8 16q0-6 6-10l2 10ZM26 0q10 6 14 16h-5Q32 8 26 0Z" fill="#f5e11d" /><rect y="18" width="48" height="24" fill="#3b3bd0" /><text x="24" y="37" textAnchor="middle" fontFamily="Liberation Sans" fontWeight="700" fontSize="21" fill="#fff">69/...</text></svg>
            </ExtSlot>
            <ExtSlot $gap={18}>
              <svg width="28" height="34" viewBox="0 0 28 34"><path d="M10 0h10l6 12H12v22H8V22H2V12h6Z" fill="#dedede" /></svg>
            </ExtSlot>
            <ExtSlot $gap={30}>
              <svg width="24" height="24" viewBox="0 0 24 24"><rect width="24" height="24" fill="#d2d2d2" /><rect x="3" y="3" width="18" height="8" fill="#b8b8b8" /></svg>
            </ExtSlot>
            <ExtSlot $gap={31}>
              <svg width="28" height="32" viewBox="0 0 28 32"><ellipse cx="14" cy="19" rx="9" ry="12" fill="#a8a8a8" /><circle cx="14" cy="5" r="5" fill="#8c8c8c" /><path d="M0 12l6 3M0 20h5M1 28l5-3M28 12l-6 3M28 20h-5M27 28l-5-3" stroke="#999" strokeWidth="2" /></svg>
            </ExtSlot>
            <ExtSlot $gap={33}>
              <svg width="6" height="30" viewBox="0 0 6 30" fill="#666"><circle cx="3" cy="3" r="3" /><circle cx="3" cy="15" r="3" /><circle cx="3" cy="27" r="3" /></svg>
            </ExtSlot>
          </Toolbar>

          <Bookmarks>
            {marks.map(m => <Bookmark key={m.t}>{m.f}{m.t}</Bookmark>)}
          </Bookmarks>

          <Navbar>
            <Brand>Steve's eMarket</Brand>
            <NavRight>
              <CartIcon />
              <Kebab viewBox="0 0 10 26" fill="#777"><circle cx="5" cy="3.500" r="3.500" /><circle cx="5" cy="13" r="3.500" /><circle cx="5" cy="22.500" r="3.500" /></Kebab>
              <Caret />
            </NavRight>
          </Navbar>

          <Content>
            <FormColumn>
              <Heading>Thanks for checking out, just fill out this form and your order will be placed</Heading>
              {fields.map(f => (
                <Field key={f.label}>
                  <Label>{f.label}</Label>
                  <Input readOnly value={f.value} $auto={f.auto} $focus={f.focus} />
                  {f.focus && <Ankh>☥</Ankh>}
                </Field>
              ))}
              <Field>
                <Label>State</Label>
                <Select defaultValue="CA"><option>CA</option></Select>
                <SelectArrows viewBox="0 0 12 28" fill="#111"><path d="M6 0 12 12H0ZM0 16H12L6 28Z" /></SelectArrows>
              </Field>
              <Field>
                <Label>Country</Label>
                <Input disabled value="US" />
              </Field>
              <PayButton type="button">Pay for Order</PayButton>
            </FormColumn>
            <CostColumn>
              <CostLabel>Total Cost:</CostLabel>
              <CostValue><Dollar>$</Dollar>873</CostValue>
            </CostColumn>
          </Content>
        </Window>
      </Backdrop>

      <DockArea>
        <Dock>
          <DockSlot $on><FinderIcon /></DockSlot>
          <DockSlot><SiriIcon /></DockSlot>
          <DockSlot><LaunchIcon /></DockSlot>
          <DockSlot><SafariIcon /></DockSlot>
          <DockSlot $on><MailIcon /></DockSlot>
          <DockSlot><ContactsIcon /></DockSlot>
          <DockSlot><CalendarIcon /></DockSlot>
          <DockSlot $on><NotesIcon /></DockSlot>
          <DockSlot><RemindersIcon /></DockSlot>
          <DockSlot><MapsIcon /></DockSlot>
          <DockSlot><PhotosIcon /></DockSlot>
          <DockSlot><MessagesIcon /></DockSlot>
          <DockSlot><FaceTimeIcon /></DockSlot>
          <DockSlot><ItunesIcon /></DockSlot>
          <DockSlot><BooksIcon /></DockSlot>
          <DockSlot><StoreIcon /></DockSlot>
          <DockSlot $on><PrefsIcon /></DockSlot>
          <DockSlot $on><ChromeIcon /></DockSlot>
          <DockSlot $on><AtomIcon /></DockSlot>
          <DockSlot $on><TerminalIcon /></DockSlot>
          <DockSlot $on><TextEditIcon /></DockSlot>
          <DockDivider><DividerLine /></DockDivider>
          <DockSlot><TxtIcon /></DockSlot>
          <DockSlot><AtomWindowIcon /></DockSlot>
          <DockSlot><ChromeWindowIcon /></DockSlot>
          <DockSlot><TrashIcon /></DockSlot>
        </Dock>
      </DockArea>
    </Root>
  );
}
